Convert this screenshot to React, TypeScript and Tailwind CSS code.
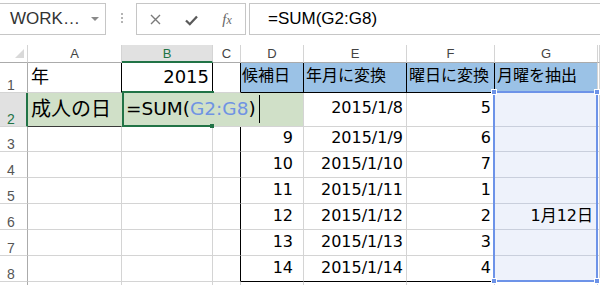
import React from 'react';

const W = ['w-[28px]', 'w-[94px]', 'w-[91px]', 'w-[28px]', 'w-[63px]', 'w-[103px]', 'w-[88px]', 'w-[103px]', 'flex-1 min-w-0'];

const BASE = 'shrink-0 h-full flex whitespace-nowrap';
const GRID = 'border-r border-b border-[#d4d4d4]';
const RH = 'items-end pl-[7px] text-[14px] leading-[14px] text-[#555] font-[family-name:Liberation_Sans,sans-serif] border-r border-b border-[#d4d4d4] border-r-[#ababab]';
const NUM = 'items-center text-[16px] leading-[16px] pb-[2px]';
const HEAD = 'items-center bg-[#9bc2e6] text-[16px] leading-[16px] pb-[3px] border-r border-b border-black';
const GREEN = 'bg-[#d0e0c8]';
const SEL = 'bg-[#eef2fb] border-r border-b border-[#c9cfdc]';

type Cell = { c?: string; t?: React.ReactNode };

const Row: React.FC<{ h: string; cells: Cell[] }> = ({ h, cells }) => (
  <div className={`flex ${h}`}>
    {cells.map((cell, i) => (
      <div key={i} className={`${W[i]} ${BASE} ${cell.c ?? GRID}`}>
        {cell.t}
      </div>
    ))}
  </div>
);

const BODY = [
  { n: '3', h: 'h-[25px]', d: '9', e: '2015/1/9', f: '6', g: '' },
  { n: '4', h: 'h-[26px]', d: '10', e: '2015/1/10', f: '7', g: '' },
  { n: '5', h: 'h-[26px]', d: '11', e: '2015/1/11', f: '1', g: '' },
  { n: '6', h: 'h-[26px]', d: '12', e: '2015/1/12', f: '2', g: '1月12日' },
  { n: '7', h: 'h-[26px]', d: '13', e: '2015/1/13', f: '3', g: '' },
  { n: '8', h: 'h-[26px]', d: '14', e: '2015/1/14', f: '4', g: '' },
];

const Toolbar: React.FC = () => (
  <div className="h-[45px] flex items-start pt-[3px] font-[family-name:Liberation_Sans,sans-serif]">
    {/* 名前ボックス */}
    <div className="w-[106px] h-[32px] border border-l-0 border-[#c6c6c6] flex items-center justify-between pl-[10px] pr-[6px]">
      <span className="text-[17px] text-[#333]">WORK…</span>
      <span className="w-0 h-0 border-l-[4px] border-r-[4px] border-t-[4px] border-l-transparent border-r-transparent border-t-[#8a8a8a]" />
    </div>
    <div className="w-[30px] flex flex-col items-center gap-[2px] pt-[10px] pl-[1px]">
      <span className="w-[2px] h-[2px] bg-[#b4b4b4]" />
      <span className="w-[2px] h-[2px] bg-[#b4b4b4]" />
      <span className="w-[2px] h-[2px] bg-[#b4b4b4]" />
    </div>
    {/* ボタン */}
    <div className="w-[110px] h-[32px] border border-[#c6c6c6] flex items-center">
      <div className="w-[36px] flex justify-center">
        <svg width="11" height="11" viewBox="0 0 11 11">
          <path d="M1 1 L10 10 M10 1 L1 10" stroke="#7a7a7a" strokeWidth="1.4" fill="none" />
        </svg>
      </div>
      <div className="w-[36px] flex justify-center pt-[2px]">
        <svg width="13" height="11" viewBox="0 0 13 11">
          <path d="M1 5.5 L4.8 9.2 L12 1.5" stroke="#5a5a5a" strokeWidth="2.3" fill="none" />
        </svg>
      </div>
      <div className="w-[36px] flex justify-center">
        <span className="font-[family-name:Liberation_Serif,serif] italic text-[15px] text-[#666] leading-none">
          f<span className="text-[12px]">x</span>
        </span>
      </div>
    </div>
    {/* 数式バー */}
    <div className="ml-[3px] flex-1 h-[32px] border border-r-0 border-[#c6c6c6] flex items-center pl-[18px] text-[17px] text-black">
      =SUM(G2:G8)
    </div>
  </div>
);

const ColumnHeaders: React.FC = () => {
  const letters = ['A', 'B', 'C', 'D', 'E', 'F', 'G', ''];
  return (
    <div className="flex h-[18px] font-[family-name:Liberation_Sans,sans-serif] text-[13px] leading-[13px]">
      <div className="w-[28px] shrink-0 flex items-end justify-end pr-[3px] pb-[4px] border-r border-b border-[#d4d4d4] border-b-[#ababab]">
        <svg width="9" height="9" viewBox="0 0 9 9">
          <polygon points="9,0 9,9 0,9" fill="#d9d9d9" />
        </svg>
      </div>
      {letters.map((l, i) =>
        l === 'B' ? (
          <div
            key={l}
            className={`${W[i + 1]} shrink-0 flex items-center justify-center bg-[#e1e1e1] text-[#217346] border-r border-b-2 border-r-[#d4d4d4] border-b-[#217346]`}
          >
            {l}
          </div>
        ) : (
          <div
            key={i}
            className={`${W[i + 1]} shrink-0 flex items-center justify-center text-[#444] border-r border-b border-[#d4d4d4] border-b-[#ababab]`}
          >
            {l}
          </div>
        ),
      )}
    </div>
  );
};

export default function App() {
  return (
    <div className="w-[600px] h-[285px] overflow-hidden bg-white relative font-[family-name:'DejaVu_Sans','Noto_Sans_CJK_JP',sans-serif] text-black">
      <Toolbar />
      <ColumnHeaders />

      {/* 1行目 */}
      <Row
        h="h-[30px]"
        cells={[
          { c: RH, t: '1' },
          { c: `items-center pl-[3px] text-[18px] leading-[18px] pb-[2px] ${GRID} border-r-black`, t: '年' },
          { c: `items-center justify-end pr-[3px] text-[18px] leading-[18px] pb-[2px] ${GRID} border-r-black`, t: '2015' },
          { c: `${GRID} border-r-black` },
          { c: `${HEAD} pl-[1px]`, t: '候補日' },
          { c: `${HEAD} pl-[2px]`, t: '年月に変換' },
          { c: `${HEAD} pl-[2px]`, t: '曜日に変換' },
          { c: `items-center bg-[#9bc2e6] text-[16px] leading-[16px] pb-[3px] pl-[2px] ${GRID}`, t: '月曜を抽出' },
          {},
        ]}
      />

      {/* 2行目 */}
      <Row
        h="h-[34px]"
        cells={[
          { c: 'items-end pl-[7px] text-[14px] leading-[14px] text-[#217346] font-[family-name:Liberation_Sans,sans-serif] bg-[#e1e1e1] border-r-2 border-b border-r-[#217346] border-b-[#d4d4d4]', t: '2' },
          { c: `items-center pl-[3px] text-[20px] leading-[20px] pb-[1px] ${GREEN} border-r border-b border-r-[#d0e0c8] border-b-[#3a3a3a]`, t: '成人の日' },
          {
            c: `items-center pl-[4px] text-[18.5px] leading-[20px] pb-[1px] ${GREEN} border-r border-b border-[#d0e0c8]`,
            t: (
              <span className="relative z-10">
                =SUM(<span className="text-[#6f93e3]">G2:G8</span>)
              </span>
            ),
          },
          { c: `${GREEN} border-r border-b border-r-[#d0e0c8] border-b-[#d4d4d4]` },
          { c: `${GREEN} ${GRID}` },
          { c: `${NUM} justify-end pr-[3px] pb-[4px] ${GRID}`, t: '2015/1/8' },
          { c: `${NUM} justify-end pr-[3px] pb-[4px] ${GRID}`, t: '5' },
          { c: SEL },
          {},
        ]}
      />

      {/* 3〜8行目 */}
      {BODY.map((r, idx) => {
        const last = idx === BODY.length - 1;
        const bottom = last ? 'border-b-black' : '';
        return (
          <Row
            key={r.n}
            h={r.h}
            cells={[
              { c: RH, t: r.n },
              {},
              {},
              { c: `${GRID} border-r-black` },
              { c: `${NUM} justify-end pr-[10px] ${GRID} ${bottom}`, t: r.d },
              { c: `${NUM} justify-end pr-[3px] ${GRID} ${bottom}`, t: r.e },
              { c: `${NUM} justify-end pr-[3px] ${GRID} ${bottom}`, t: r.f },
              { c: `${NUM} justify-end pr-[4px] ${SEL}`, t: r.g },
              {},
            ]}
          />
        );
      })}

      {/* 下端 */}
      <Row
        h="h-[4px]"
        cells={[
          { c: 'border-r border-r-[#ababab]' },
          { c: 'border-r border-[#d4d4d4]' },
          { c: 'border-r border-[#d4d4d4]' },
          { c: 'border-r border-[#d4d4d4]' },
          { c: 'border-r border-[#d4d4d4]' },
          { c: 'border-r border-[#d4d4d4]' },
          { c: 'border-r border-[#d4d4d4]' },
          { c: 'border-r border-[#d4d4d4]' },
          { c: '' },
        ]}
      />

      {/* 編集中のセル B2 */}
      <div className="absolute left-[122px] top-[91px] w-[92px] h-[36px] border-l-2 border-t-2 border-b-2 border-[#217346] pointer-events-none" />
      <div className="absolute left-[210px] top-[124px] w-[4px] h-[4px] bg-[#217346]" />
      <div className="absolute left-[259px] top-[95px] w-px h-[28px] bg-black z-20" />

      {/* 参照範囲 G2:G8 */}
      <div className="absolute left-[493px] top-[91px] w-[105px] h-[191px] border-2 border-[#6d93e8] pointer-events-none" />
      <div className="absolute left-[491px] top-[89px] w-[6px] h-[6px] bg-[#6d93e8] border border-white" />
      <div className="absolute left-[594px] top-[89px] w-[6px] h-[6px] bg-[#6d93e8] border border-white" />
      <div className="absolute left-[491px] top-[278px] w-[6px] h-[6px] bg-[#6d93e8] border border-white" />
      <div className="absolute left-[594px] top-[278px] w-[6px] h-[6px] bg-[#6d93e8] border border-white" />
    </div>
  );
}
